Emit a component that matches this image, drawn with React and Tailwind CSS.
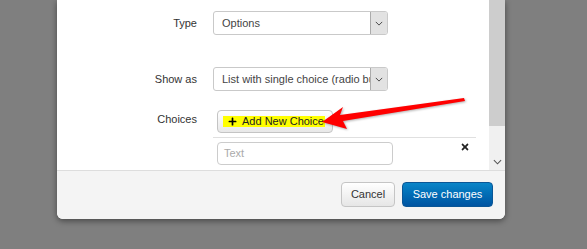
import { FaTimes, FaPlus } from 'react-icons/fa'

const font = { fontFamily: '"Liberation Sans", Arial, sans-serif' }

function Chevron({ className }) {
  return (
    <svg viewBox="0 0 10 6" className={className} fill="none" stroke="currentColor" strokeWidth="1.2">
      <path d="M1 1l4 4 4-4" />
    </svg>
  )
}

function Select({ value }) {
  return (
    <div className="flex h-[24px] w-[175px] rounded-[3px] border border-[#c9c9c9] bg-white overflow-hidden">
      <div className="flex-1 overflow-hidden whitespace-nowrap pl-[8px] leading-[22px] text-[11px] text-[#444]">
        {value}
      </div>
      <div className="flex w-[17px] items-center justify-center border-l border-[#ababab] bg-[#e2e2e2] text-[#444]">
        <Chevron className="w-[8px] h-[5px]" />
      </div>
    </div>
  )
}

export default function App() {
  return (
    <div className="relative w-[587px] h-[249px] overflow-hidden bg-[#7f7f7f]" style={font}>
      <div className="ml-[57px] flex h-[219px] w-[448px] flex-col overflow-hidden rounded-b-[6px] bg-white shadow-[0_2px_6px_rgba(0,0,0,0.45)]">
        <div className="flex h-[170px]">
          <div className="flex-1 pt-[11px] text-[11px] text-[#333]">
            <div className="flex items-center">
              <span className="w-[140px] text-right">Type</span>
              <div className="ml-[16px]"><Select value="Options" /></div>
            </div>
            <div className="mt-[32px] flex items-center">
              <span className="w-[140px] text-right">Show as</span>
              <div className="ml-[16px]"><Select value="List with single choice (radio buttons)" /></div>
            </div>
            <div className="mt-[19px] flex">
              <span className="w-[140px] pt-[1px] text-right">Choices</span>
              <div className="ml-[16px] flex-1 pr-[13px]">
                <div className="pl-[4px]">
                  <button className="flex h-[23px] w-[116px] items-center whitespace-nowrap rounded-[4px] border border-[#c4c4c4] bg-gradient-to-b from-white to-[#e8e8e8] pl-[5px] text-[11px] text-[#222]">
                    <span className="flex h-[11px] items-center gap-[5px] bg-[#ffff00] pl-[5px] pr-[1px]">
                      <FaPlus className="w-[9px] h-[9px] shrink-0 text-black" />
                      <span>Add New Choice</span>
                    </span>
                  </button>
                </div>
                <div className="mt-[4px] border-t border-[#e0e0e0]" />
                <div className="mt-[4px] flex items-center pl-[4px]">
                  <div className="h-[23px] w-[176px] rounded-[4px] border border-[#cccccc] pl-[6px] leading-[21px] text-[#aaa]">
                    Text
                  </div>
                  <FaTimes className="ml-auto mr-[6px] mt-[-14px] w-[10px] h-[10px] text-[#222]" />
                </div>
              </div>
            </div>
          </div>
          <div className="flex w-[16px] flex-col bg-[#f0f0f0]">
            <div className="h-[126px] bg-[#cdcdcd]" />
            <div className="mt-auto mb-[5px] flex justify-center text-[#555]">
              <Chevron className="w-[9px] h-[6px]" />
            </div>
          </div>
        </div>
        <div className="flex flex-1 items-center justify-end gap-[7px] border-t border-[#dddddd] bg-[#f4f4f4] pr-[12px] pb-[1px]">
          <button className="h-[25px] w-[54px] rounded-[4px] border border-[#c5c5c5] bg-gradient-to-b from-white to-[#e6e6e6] text-[11px] text-[#333]">
            Cancel
          </button>
          <button className="h-[25px] w-[91px] rounded-[4px] border border-[#0a5696] bg-gradient-to-b from-[#0a85c8] to-[#0054a2] text-[11px] text-white">
            Save changes
          </button>
        </div>
      </div>
      <svg className="absolute left-0 top-0 w-[587px] h-[249px] pointer-events-none drop-shadow-[1px_1px_1px_rgba(0,0,0,0.3)]" viewBox="0 0 587 249">
        <polygon points="322,122 343,107 340,115 464,98 465,101 343,121 347,129" fill="#ff0000" />
      </svg>
    </div>
  )
}
